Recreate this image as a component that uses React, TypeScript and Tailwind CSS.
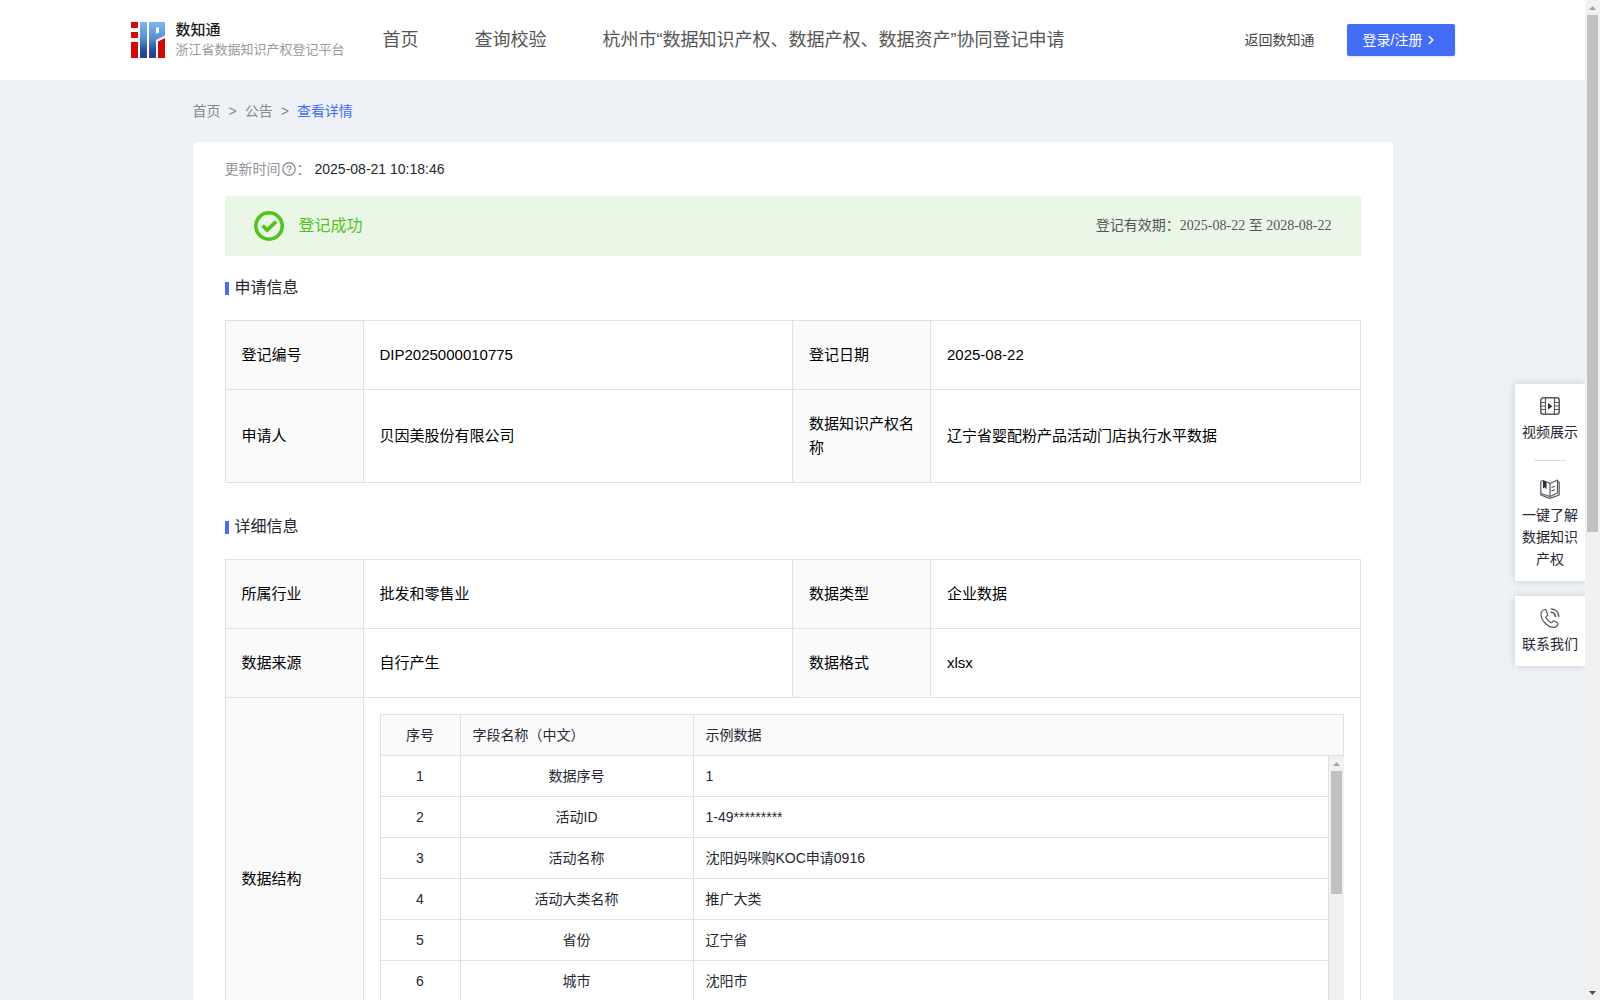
import type { ReactNode } from "react";
import { ChevronRight } from "lucide-react";

const fields = [
  ["1", "数据序号", "1"],
  ["2", "活动ID", "1-49*********"],
  ["3", "活动名称", "沈阳妈咪购KOC申请0916"],
  ["4", "活动大类名称", "推广大类"],
  ["5", "省份", "辽宁省"],
  ["6", "城市", "沈阳市"],
];

function Logo() {
  return (
    <svg width="34" height="36" viewBox="0 0 34 36" aria-hidden="true">
      <defs>
        <linearGradient id="steel" x1="0" y1="0" x2="0" y2="36" gradientUnits="userSpaceOnUse">
          <stop offset="0" stopColor="#7fb6ea" />
          <stop offset="0.45" stopColor="#5a8fd2" />
          <stop offset="0.8" stopColor="#2b4a94" />
          <stop offset="1" stopColor="#243f86" />
        </linearGradient>
      </defs>
      <rect x="0" y="0" width="7" height="6" fill="#d20a0a" />
      <rect x="0" y="10" width="7" height="6" fill="#d20a0a" />
      <rect x="0" y="20" width="7" height="16" fill="#d20a0a" />
      <rect x="9" y="0" width="7" height="36" fill="url(#steel)" />
      <path d="M18 0H34V13.500L25 18V36H18ZM25 5.500V12L28 10.500V5.500Z" fill="url(#steel)" fillRule="evenodd" />
      <path d="M27 19.500L34 16V36H27Z" fill="#d20a0a" />
    </svg>
  );
}

function HelpIcon() {
  return (
    <svg className="mx-px" width="14" height="14" viewBox="0 0 14 14" fill="none" stroke="#909399" aria-hidden="true">
      <circle cx="7" cy="7" r="6.200" strokeWidth="1.400" />
      <path d="M5.200 5.700a1.800 1.800 0 1 1 2.600 1.600c-.6.3-.8.6-.8 1.200" strokeWidth="1.300" />
      <path d="M7 9.400v1.300" strokeWidth="1.300" />
    </svg>
  );
}

function SuccessIcon() {
  return (
    <svg width="30" height="30" viewBox="0 0 30 30" fill="none" stroke="#4fc41a" aria-hidden="true">
      <circle cx="15" cy="15" r="13.200" strokeWidth="3.600" />
      <path d="M8.500 14.700l4.700 4.500 8.800-8.700" strokeWidth="3.800" />
    </svg>
  );
}

function VideoIcon() {
  return (
    <svg width="20" height="20" viewBox="0 0 20 20" fill="none" stroke="#55585f" aria-hidden="true">
      <rect x="0.800" y="1.800" width="18.400" height="16.400" rx="2.500" strokeWidth="1.500" />
      <path d="M5.500 2v16M14.500 2v16M1 6.500h4M1 13.500h4M15 6.500h4M15 13.500h4M1 10h4M15 10h4" strokeWidth="1.200" />
      <path d="M8 7v6.400l4.500-3.200z" fill="#2b2d33" stroke="none" />
    </svg>
  );
}

function BookIcon() {
  return (
    <svg width="20" height="20" viewBox="0 0 20 20" fill="none" stroke="#55585f" strokeWidth="1.200" strokeLinejoin="round" aria-hidden="true">
      <path d="M3 1.500L.8 2.500V16l9 3.400L19.200 16V3.500L17.500 2" />
      <path d="M3 1.500l7 3V17.500L1 14.500" />
      <path d="M10 4.500L17.500 1v13L10 17.500" />
      <path d="M11.500 8.500l3.500-1.300M11.500 12l3.500-1.300" />
      <path d="M3 1.500v8l1.700-1.200L6.500 10.500V3z" fill="#2b2d33" stroke="none" />
    </svg>
  );
}

function PhoneIcon() {
  return (
    <svg width="20" height="20" viewBox="0 0 20 20" fill="none" stroke="#55585f" strokeWidth="1.200" strokeLinejoin="round" strokeLinecap="round" aria-hidden="true">
      <path d="M4.500 1.500C2.500 2 1 3.800 1 6.500c0 3 2 6.500 4.500 9S11 19.300 13.500 19.300c2.300 0 4-1.300 4.500-3.300.1-.6-.1-1-.6-1.300l-3-1.700c-.6-.3-1.100-.2-1.500.3l-.9 1.100c-.4.4-.8.5-1.300.2-1.900-1.100-3.600-2.900-4.700-4.900-.3-.5-.2-.9.2-1.200l1-.8c.5-.4.7-.9.4-1.500L6 2.200c-.3-.6-.8-.9-1.500-.7z" />
      <path d="M11.200 4.300c2.300.2 4 2 4.200 4.200M11.500 1c4 .3 7 3.300 7.200 7.300" strokeWidth="1.600" />
    </svg>
  );
}

function Arrow({ down = false }: { down?: boolean }) {
  return (
    <span className="flex h-[15px] w-[15px] shrink-0 items-center justify-center">
      <svg width="7" height="4" viewBox="0 0 7 4" aria-hidden="true">
        {down ? <path d="M0 0h7L3.500 4z" fill="#505050" /> : <path d="M0 4h7L3.500 0z" fill="#a3a3a3" />}
      </svg>
    </span>
  );
}

function SectionTitle({ children }: { children: ReactNode }) {
  return (
    <h2 className="flex h-6 items-center gap-1.5 text-base text-[#252733]">
      <span className="h-[13px] w-1 bg-[#446df6]" />
      {children}
    </h2>
  );
}

function Row({ cells }: { cells: [string, string, string, string] }) {
  return (
    <tr>
      <Label>{cells[0]}</Label>
      <Value>{cells[1]}</Value>
      <Label>{cells[2]}</Label>
      <Value>{cells[3]}</Value>
    </tr>
  );
}

function Label({ children }: { children: ReactNode }) {
  return (
    <th scope="row" className="border border-[#e1e1e1] bg-[#fafafa] px-4 py-[22px] text-left font-normal">
      {children}
    </th>
  );
}

function Value({ children }: { children: ReactNode }) {
  return <td className="border border-[#e1e1e1] px-4 py-[22px]">{children}</td>;
}

function InfoTable({ children }: { children: ReactNode }) {
  return (
    <table className="w-full table-fixed border-collapse text-[15px] leading-6 text-black">
      <colgroup>
        <col className="w-[138px]" />
        <col />
        <col className="w-[138px]" />
        <col />
      </colgroup>
      <tbody>{children}</tbody>
    </table>
  );
}

function SideLink({ icon, children }: { icon: ReactNode; children: ReactNode }) {
  return (
    <a href="#" className="flex flex-col items-center gap-[5px] px-1.5 text-center text-sm leading-[22px] text-[#252733]">
      {icon}
      <span>{children}</span>
    </a>
  );
}

export default function App() {
  return (
    <div className="relative flex h-screen overflow-hidden bg-[#eef2f6] font-['Liberation_Sans','Noto_Sans_CJK_SC',sans-serif] text-sm text-[#252733]">
      <div className="min-w-0 flex-1 overflow-hidden">
        <header className="bg-white">
          <div className="mx-auto flex h-20 max-w-[1324px] items-center">
            <a href="#" className="flex w-[252px] shrink-0 items-center gap-[11px]">
              <Logo />
              <span className="flex flex-col">
                <strong className="text-[15px] leading-5 font-medium text-[#1c1c1c]">数知通</strong>
                <span className="text-[13px] leading-5 whitespace-nowrap text-[#999]">浙江省数据知识产权登记平台</span>
              </span>
            </a>
            <nav className="flex flex-1 gap-14 text-lg whitespace-nowrap text-[#555]">
              <a href="#">首页</a>
              <a href="#">查询校验</a>
              <a href="#">杭州市“数据知识产权、数据产权、数据资产”协同登记申请</a>
            </nav>
            <a href="#" className="text-[#444]">返回数知通</a>
            <button type="button" className="ml-8 flex h-8 w-[108px] items-center gap-0.5 rounded-xs bg-[#446df6] pl-4 text-sm text-white shadow-sm">
              登录/注册
              <ChevronRight size={14} strokeWidth={2.5} />
            </button>
          </div>
        </header>

        <div className="mx-auto max-w-[1200px]">
          <nav className="flex h-[61px] items-center gap-2 text-[#888]">
            <a href="#">首页</a>
            <span>&gt;</span>
            <a href="#">公告</a>
            <span>&gt;</span>
            <a href="#" className="text-[#446df6]">查看详情</a>
          </nav>

          <main className="mt-px rounded bg-white px-8 pt-4">
            <div className="flex h-[22px] items-center">
              <span className="flex items-center text-[#909399]">
                更新时间
                <HelpIcon />
                ：
              </span>
              <time className="ml-1">2025-08-21 10:18:46</time>
            </div>

            <div className="mt-4 flex h-[60px] items-center bg-[#ebf7e6] pr-[29px] pl-[29px]">
              <SuccessIcon />
              <span className="ml-[15px] text-base text-[#4fc41a]">登记成功</span>
              <span className="ml-auto font-['Liberation_Serif','Noto_Sans_CJK_SC',serif] text-[#555]">
                登记有效期：2025-08-22 至 2028-08-22
              </span>
            </div>

            <section className="mt-5">
              <SectionTitle>申请信息</SectionTitle>
              <div className="mt-5">
                <InfoTable>
                  <Row cells={["登记编号", "DIP2025000010775", "登记日期", "2025-08-22"]} />
                  <Row cells={["申请人", "贝因美股份有限公司", "数据知识产权名称", "辽宁省婴配粉产品活动门店执行水平数据"]} />
                </InfoTable>
              </div>
            </section>

            <section className="mt-8">
              <SectionTitle>详细信息</SectionTitle>
              <div className="mt-5">
                <InfoTable>
                  <Row cells={["所属行业", "批发和零售业", "数据类型", "企业数据"]} />
                  <Row cells={["数据来源", "自行产生", "数据格式", "xlsx"]} />
                  <tr>
                    <Label>数据结构</Label>
                    <td colSpan={3} className="border border-[#e1e1e1] p-4 text-sm text-[#252733]">
                      <table className="w-full table-fixed border-collapse">
                        <colgroup>
                          <col className="w-20" />
                          <col className="w-[233px]" />
                          <col />
                        </colgroup>
                        <thead>
                          <tr className="h-[41px] bg-[#fafafa]">
                            <th className="border border-[#e1e1e1] font-normal">序号</th>
                            <th className="border border-[#e1e1e1] px-3 text-left font-normal">字段名称（中文）</th>
                            <th className="border border-[#e1e1e1] px-3 text-left font-normal">示例数据</th>
                          </tr>
                        </thead>
                      </table>
                      <div className="flex h-[288px] overflow-hidden">
                        <table className="min-w-0 flex-1 table-fixed border-separate border-spacing-0 self-start">
                          <colgroup>
                            <col className="w-[81px]" />
                            <col className="w-[233px]" />
                            <col />
                          </colgroup>
                          <tbody>
                            {fields.map(([no, name, sample]) => (
                              <tr key={no} className="h-[41px]">
                                <td className="border-x border-b border-[#e1e1e1] text-center">{no}</td>
                                <td className="border-r border-b border-[#e1e1e1] px-3 text-center">{name}</td>
                                <td className="border-r border-b border-[#e1e1e1] px-3">{sample}</td>
                              </tr>
                            ))}
                          </tbody>
                        </table>
                        <div className="flex w-[15px] shrink-0 flex-col items-center bg-[#f1f1f1]">
                          <Arrow />
                          <span className="h-[123px] w-[11px] bg-[#c1c1c1]" />
                        </div>
                      </div>
                    </td>
                  </tr>
                </InfoTable>
              </div>
            </section>
          </main>
        </div>
      </div>

      <div className="flex w-[15px] shrink-0 flex-col items-center bg-[#f1f1f1]">
        <Arrow />
        <span className="h-[517px] w-[11px] bg-[#c1c1c1]" />
        <span className="flex-1" />
        <Arrow down />
      </div>

      <aside className="absolute top-96 right-[15px] flex w-[70px] flex-col gap-[15px]">
        <div className="flex flex-col bg-white pt-3 pb-[11px] shadow-[0_0_8px_rgba(0,0,0,0.16)] [clip-path:inset(-10px_0_-10px_-10px)]">
          <SideLink icon={<VideoIcon />}>视频展示</SideLink>
          <span className="mx-auto mt-[17px] mb-[18px] h-px w-8 bg-[#dcdcdc]" />
          <SideLink icon={<BookIcon />}>一键了解数据知识产权</SideLink>
        </div>
        <div className="flex flex-col bg-white pt-3 pb-[11px] shadow-[0_0_8px_rgba(0,0,0,0.16)] [clip-path:inset(-10px_0_-10px_-10px)]">
          <SideLink icon={<PhoneIcon />}>联系我们</SideLink>
        </div>
      </aside>
    </div>
  );
}
